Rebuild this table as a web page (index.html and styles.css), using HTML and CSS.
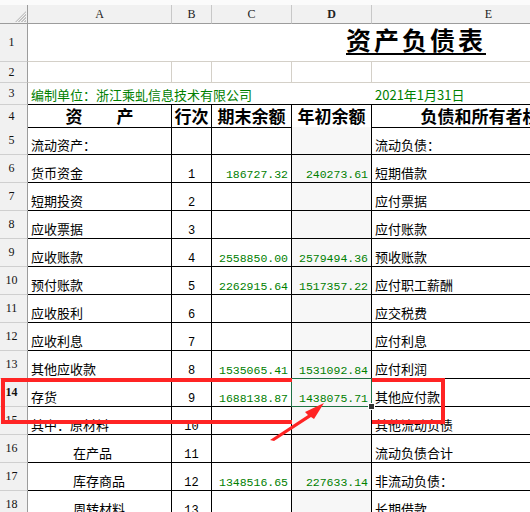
FILE: index.html
```html
<!DOCTYPE html>
<html lang="zh">
<head>
<meta charset="utf-8">
<link rel="stylesheet" href="styles.css">
</head>
<body>
<div class="sheet">
  <div class="topstrip"></div>
  <div class="row colhdr">
    <div class="corner"><svg class="tri" width="11" height="11" viewBox="0 0 11 11"><path d="M11 0 L11 11 L0 11 Z" fill="#c4c4c4"/><path d="M2 11 L11 2 M5 11 L11 5 M8 11 L11 8" stroke="#f4f4f4" stroke-width="1"/></svg></div>
    <div>A</div><div>B</div><div>C</div><div class="sel">D</div><div>E</div>
  </div>
  <div class="row r1">
    <div class="rh">1</div>
    <div class="title-cell"><span class="title">资产负债表</span></div>
  </div>
  <div class="row r2">
    <div class="rh">2</div>
    <div class="c"></div><div class="c"></div><div class="c"></div><div class="c"></div><div class="c"></div>
  </div>
  <div class="row r3">
    <div class="rh">3</div>
    <div class="c span4">编制单位：浙江乘虬信息技术有限公司</div>
    <div class="c">2021年1月31日</div>
  </div>
  <div class="row r4">
    <div class="rh">4</div>
    <div class="c">资　　产</div><div class="c">行次</div><div class="c">期末余额</div><div class="c">年初余额</div><div class="c">负债和所有者权益</div>
  </div>
  <div class="row rd">
    <div class="rh">5</div>
    <div class="c">流动资产：</div><div class="c no"></div><div class="c num"></div><div class="c num d"></div><div class="c">流动负债：</div>
  </div>
  <div class="row rd">
    <div class="rh">6</div>
    <div class="c">货币资金</div><div class="c no">1</div><div class="c num">186727.32</div><div class="c num d">240273.61</div><div class="c">短期借款</div>
  </div>
  <div class="row rd">
    <div class="rh">7</div>
    <div class="c">短期投资</div><div class="c no">2</div><div class="c num"></div><div class="c num d"></div><div class="c">应付票据</div>
  </div>
  <div class="row rd">
    <div class="rh">8</div>
    <div class="c">应收票据</div><div class="c no">3</div><div class="c num"></div><div class="c num d"></div><div class="c">应付账款</div>
  </div>
  <div class="row rd">
    <div class="rh">9</div>
    <div class="c">应收账款</div><div class="c no">4</div><div class="c num">2558850.00</div><div class="c num d">2579494.36</div><div class="c">预收账款</div>
  </div>
  <div class="row rd">
    <div class="rh">10</div>
    <div class="c">预付账款</div><div class="c no">5</div><div class="c num">2262915.64</div><div class="c num d">1517357.22</div><div class="c">应付职工薪酬</div>
  </div>
  <div class="row rd">
    <div class="rh">11</div>
    <div class="c">应收股利</div><div class="c no">6</div><div class="c num"></div><div class="c num d"></div><div class="c">应交税费</div>
  </div>
  <div class="row rd">
    <div class="rh">12</div>
    <div class="c">应收利息</div><div class="c no">7</div><div class="c num"></div><div class="c num d"></div><div class="c">应付利息</div>
  </div>
  <div class="row rd">
    <div class="rh">13</div>
    <div class="c">其他应收款</div><div class="c no">8</div><div class="c num">1535065.41</div><div class="c num d">1531092.84</div><div class="c">应付利润</div>
  </div>
  <div class="row rd">
    <div class="rh sel">14</div>
    <div class="c">存货</div><div class="c no">9</div><div class="c num">1688138.87</div><div class="c num d">1438075.71</div><div class="c">其他应付款</div>
  </div>
  <div class="row rd">
    <div class="rh">15</div>
    <div class="c">其中：原材料</div><div class="c no">10</div><div class="c num"></div><div class="c num d"></div><div class="c">其他流动负债</div>
  </div>
  <div class="row rd">
    <div class="rh">16</div>
    <div class="c indent">在产品</div><div class="c no">11</div><div class="c num"></div><div class="c num d"></div><div class="c">流动负债合计</div>
  </div>
  <div class="row rd">
    <div class="rh">17</div>
    <div class="c indent">库存商品</div><div class="c no">12</div><div class="c num">1348516.65</div><div class="c num d">227633.14</div><div class="c">非流动负债：</div>
  </div>
  <div class="row rd">
    <div class="rh">18</div>
    <div class="c indent">周转材料</div><div class="c no">13</div><div class="c num"></div><div class="c num d"></div><div class="c">长期借款</div>
  </div>

  <div class="selbox"><span class="handle"></span></div>
  <div class="redbox red-left"></div>
  <div class="redbox red-right"></div>
  <svg class="arrow" width="530" height="512" viewBox="0 0 530 512">
    <polygon points="270,440 308,415 305,412 324,403 314,419 311,417 274,441" fill="#ff2424"/>
  </svg>
</div>
</body>
</html>
```

FILE: styles.css
```css
html, body {
  margin: 0;
  height: 100%;
  overflow: hidden;
  background: #fff;
}
body {
  font-family: "Noto Sans CJK SC", sans-serif;
  font-size: 13px;
  color: #000;
}
.sheet {
  position: relative;
  width: 606px;
}
.topstrip {
  height: 5px;
  background: #fbfbfb;
}
.row {
  display: grid;
  grid-template-columns: 28px 144px 40px 80px 80px 234px;
}
.row > div {
  box-sizing: border-box;
  min-width: 0;
}
.colhdr { height: 19px; }
.colhdr > div {
  background: #f1f1f1;
  border-right: 1px solid #c8c8c8;
  border-bottom: 1px solid #9c9c9c;
  font-family: "Liberation Serif", serif;
  font-size: 12px;
  color: #222;
  display: flex;
  align-items: center;
  justify-content: center;
}
.colhdr .corner {
  border-right-color: #9c9c9c;
  position: relative;
}
.tri {
  position: absolute;
  right: 1px;
  bottom: 1px;
}
.sel { font-weight: 700; }
.rh {
  background: #f1f1f1;
  border-right: 1px solid #9c9c9c;
  border-bottom: 1px solid #cfcfcf;
  font-family: "Liberation Serif", serif;
  font-size: 12px;
  color: #111;
  display: flex;
  align-items: center;
  justify-content: center;
  padding-right: 4px;
}
.r1 { height: 38px; }
.r2 { height: 21px; }
.r3 { height: 22px; }
.r4 { height: 22px; }
.rd { height: 28px; }

.title-cell {
  grid-column: span 5;
  border-bottom: 1px solid #d4d0c8;
  display: flex;
  align-items: flex-end;
  padding: 0 0 6px 318px;
}
.title {
  display: inline-block;
  font-weight: 700;
  font-size: 25px;
  letter-spacing: 3px;
  line-height: 28px;
  border-bottom: 2px solid #000;
  white-space: nowrap;
}
.r2 .c {
  border-right: 1px solid #d4d0c8;
  border-bottom: 1px solid #d4d0c8;
}
.r3 .c {
  border-bottom: 1px solid #000;
  color: #008000;
  display: flex;
  align-items: flex-end;
  padding: 0 0 1px 3px;
  line-height: 16px;
  white-space: nowrap;
}
.r3 .span4 { grid-column: span 4; }
.r4 .c {
  border-right: 1px solid #000;
  border-bottom: 1px solid #000;
  font-weight: 700;
  font-size: 17px;
  line-height: 22px;
  display: flex;
  align-items: flex-end;
  justify-content: center;
  white-space: nowrap;
}
.rd .c {
  border-right: 1px solid #000;
  border-bottom: 1px solid #000;
  display: flex;
  align-items: flex-end;
  line-height: 16px;
  padding: 0 3px 1px;
  white-space: nowrap;
}
.rd .num {
  justify-content: flex-end;
  font-family: "Liberation Mono", monospace;
  font-size: 11.5px;
  line-height: 12px;
  color: #008000;
}
.rd .no {
  justify-content: center;
  font-family: "Liberation Mono", monospace;
  font-size: 12px;
  line-height: 12px;
}
.rd .d { background: #f7f7f7; }
.rd .indent { padding-left: 45px; }

.selbox {
  position: absolute;
  left: 291px;
  top: 378px;
  width: 81px;
  height: 29px;
  box-sizing: border-box;
  border: 1px solid #1f6e43;
}
.handle {
  position: absolute;
  right: -4px;
  bottom: -4px;
  width: 5px;
  height: 5px;
  background: #333;
  border: 1px solid #fff;
}
.redbox {
  position: absolute;
  top: 378px;
  height: 46px;
  box-sizing: border-box;
  border: 4px solid #ff2424;
}
.red-left {
  left: 1px;
  width: 291px;
  border-right: 0;
}
.red-right {
  left: 372px;
  width: 73px;
  border-left: 0;
}
.arrow {
  position: absolute;
  left: 0;
  top: 0;
  pointer-events: none;
}
```
